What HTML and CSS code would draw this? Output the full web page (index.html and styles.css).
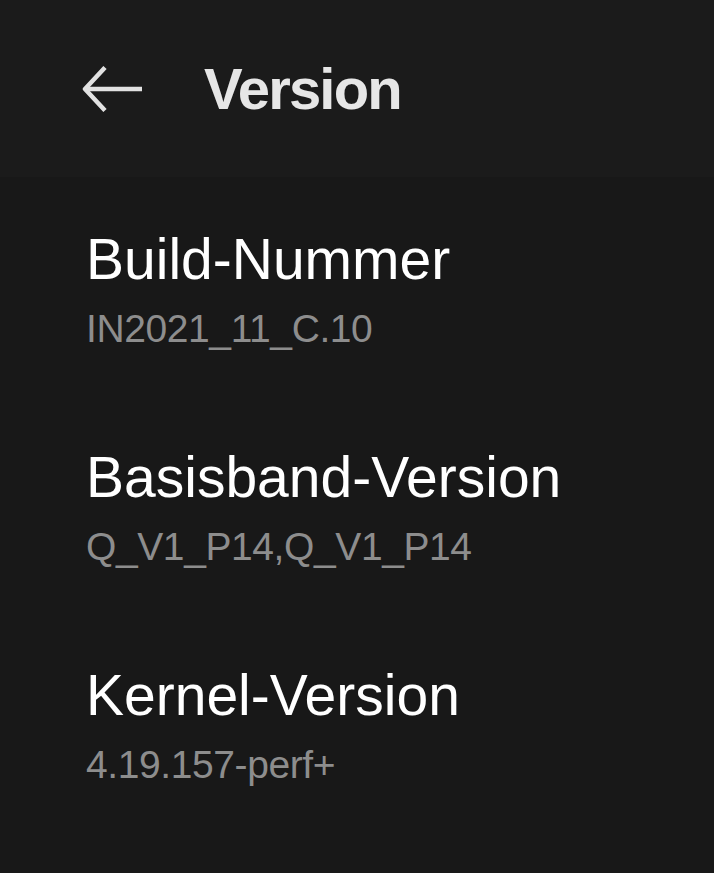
FILE: index.html
```html
<!DOCTYPE html>
<html lang="de">

<head>
  <meta charset="UTF-8" />
  <meta name="viewport" content="width=device-width, initial-scale=1.0" />
  <title>Version</title>
  <link rel="stylesheet" href="styles.css">
</head>

<body>
  <header>
    <a href="#" class="back" aria-label="Zurück">
      <svg width="60" height="46" viewBox="0 0 60 46">
        <path d="M60 23 H4" />
        <path d="M23 1.5 L3 23 L23 44.5" />
      </svg>
    </a>
    <h1>Version</h1>
  </header>

  <main>
    <div class="item">
      <div class="item-title">Build-Nummer</div>
      <div class="item-value">IN2021_11_C.10</div>
    </div>
    <div class="item">
      <div class="item-title">Basisband-Version</div>
      <div class="item-value">Q_V1_P14,Q_V1_P14</div>
    </div>
    <div class="item">
      <div class="item-title">Kernel-Version</div>
      <div class="item-value">4.19.157-perf+</div>
    </div>
  </main>
</body>

</html>
```

FILE: styles.css
```css
* {
  margin: 0;
  padding: 0;
  box-sizing: border-box;
}

body {
  font-family: 'Liberation Sans', Arial, sans-serif;
  background: #181818;
  color: #fff;
  overflow: hidden;
}

header {
  display: flex;
  align-items: center;
  gap: 62px;
  height: 177px;
  padding-left: 82px;
  background: #1b1b1b;
}

.back {
  display: flex;
}

.back svg {
  fill: none;
  stroke: #e2e2e2;
  stroke-width: 4.5;
  stroke-linejoin: round;
}

h1 {
  font-size: 58px;
  line-height: 64px;
  font-weight: 700;
  letter-spacing: -1.8px;
  color: #e6e6e6;
}

main {
  display: flex;
  flex-direction: column;
  gap: 92px;
  padding: 50px 0 0 86px;
}

.item-title {
  font-size: 57px;
  line-height: 64px;
  color: #fff;
}

.item-value {
  margin-top: 14px;
  font-size: 39px;
  line-height: 48px;
  letter-spacing: -0.4px;
  color: #8d8d8d;
}
```
